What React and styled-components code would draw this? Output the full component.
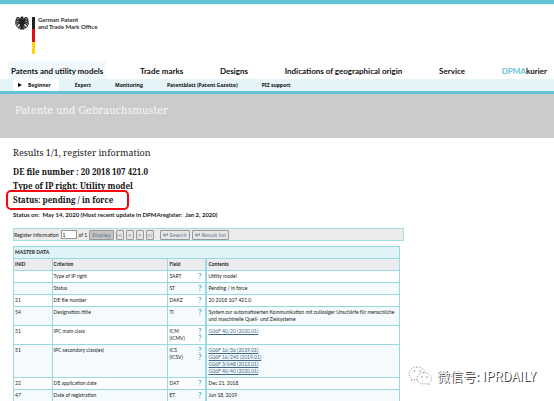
import { Fragment } from "react";
import styled, { createGlobalStyle } from "styled-components";

const navItems = [
  { label: "Patents and utility models", active: true },
  { label: "Trade marks" },
  { label: "Designs" },
  { label: "Indications of geographical origin" },
  { label: "Service" },
];

const subNavItems = [
  "Expert",
  "Monitoring",
  "Patentblatt (Patent Gazette)",
  "PIZ support",
];

const rows = [
  { criterion: "Type of IP right", fields: ["SART"], contents: "Utility model" },
  { criterion: "Status", fields: ["ST"], contents: "Pending / in force" },
  {
    inid: "21",
    criterion: "DE file number",
    fields: ["DAKZ"],
    contents: "20 2018 107 421.0",
  },
  {
    inid: "54",
    criterion: "Designation/title",
    fields: ["TI"],
    contents:
      "System zur automatisierten Kommunikation mit zulässiger Unschärfe für menschliche und maschinelle Quell- und Zielsysteme",
  },
  {
    inid: "51",
    criterion: "IPC main class",
    fields: ["ICM", "(ICMV)"],
    links: ["G06F 40/20 (2020.01)"],
  },
  {
    inid: "51",
    criterion: "IPC secondary class(es)",
    fields: ["ICS", "(ICSV)"],
    links: [
      "G06F 16/36 (2019.01)",
      "G06F 16/245 (2019.01)",
      "G06F 3/048 (2013.01)",
      "G06F 40/40 (2020.01)",
    ],
  },
  {
    inid: "22",
    criterion: "DE application date",
    fields: ["DAT"],
    contents: "Dec 21, 2018",
  },
  {
    inid: "47",
    criterion: "Date of registration",
    fields: ["ET"],
    contents: "Jun 18, 2019",
  },
];

const App = () => {
  return (
    <Page>
      <GlobalStyle />
      <Header>
        <Eagle />
        <Flag />
        <Office>
          German Patent
          <br />
          and Trade Mark Office
        </Office>
      </Header>
      <Nav>
        {navItems.map((item) => (
          <NavLink key={item.label} href="#" $active={item.active}>
            {item.label}
          </NavLink>
        ))}
        <NavLink href="#">
          <span>DPMA</span>kurier
        </NavLink>
      </Nav>
      <SubNav>
        <SubLink href="#" $active>
          <Arrow viewBox="0 0 4 4">
            <path d="M0 0L4 2L0 4Z" />
          </Arrow>
          Beginner
        </SubLink>
        {subNavItems.map((item) => (
          <SubLink key={item} href="#">
            {item}
          </SubLink>
        ))}
      </SubNav>
      <Banner>Patente und Gebrauchsmuster</Banner>
      <Main>
        <Title>Results 1/1, register information</Title>
        <Facts>
          <Fact>DE file number : 20 2018 107 421.0</Fact>
          <Fact>Type of IP right: Utility model</Fact>
          <MarkedFact>Status: pending / in force</MarkedFact>
        </Facts>
        <Updated>
          Status on:&nbsp; May 14, 2020 (Most recent update in
          DPMAregister:&nbsp; Jan 2, 2020)
        </Updated>
        <Toolbar>
          <label htmlFor="record">Register information</label>
          <RecordInput id="record" type="text" defaultValue="1" />
          <span>of 1</span>
          <Buttons>
            <Button $dark>Display</Button>
            <Button $muted aria-label="First">|&lt;</Button>
            <Button $muted aria-label="Previous">&lt;</Button>
            <Button $muted aria-label="Next">&gt;</Button>
            <Button $muted aria-label="Last">&gt;|</Button>
          </Buttons>
          <Buttons $apart>
            <Button>
              <BackIcon /> Search
            </Button>
            <Button>
              <BackIcon /> Result list
            </Button>
          </Buttons>
        </Toolbar>
        <TableBox>
          <Table>
            <colgroup>
              <col width="10%" />
              <col width="30%" />
              <col width="10%" />
              <col width="50%" />
            </colgroup>
            <thead>
              <tr>
                <Caption colSpan={4}>MASTER DATA</Caption>
              </tr>
              <tr>
                <th>INID</th>
                <th>Criterion</th>
                <th>Field</th>
                <th>Contents</th>
              </tr>
            </thead>
            <tbody>
              {rows.map((row) => (
                <tr key={row.criterion}>
                  <td>{row.inid}</td>
                  <td>{row.criterion}</td>
                  <td>
                    <Field>
                      {row.fields.map((field) => (
                        <Fragment key={field}>
                          <span>{field}</span>
                          <Help href="#">?</Help>
                        </Fragment>
                      ))}
                    </Field>
                  </td>
                  <td>
                    {row.contents}
                    {row.links?.map((link) => (
                      <ClassLink key={link} href="#">
                        {link}
                      </ClassLink>
                    ))}
                  </td>
                </tr>
              ))}
            </tbody>
          </Table>
        </TableBox>
      </Main>
      <Watermark>
        <WeChat />
        微信号: IPRDAILY
      </Watermark>
    </Page>
  );
};

const Eagle = () => (
  <EagleSvg viewBox="0 0 28 28">
    <g fill="none" stroke="#222" strokeWidth="2.4" strokeLinecap="round">
      <path d="M11 8C9 3 6 2 4 4M11 10C7 5 4 5 2 8M11 12C7 8 3 9 1 12M11 14C7 11 3 13 1 16M11 16C8 14 4 16 3 20" />
      <path d="M17 8C19 3 22 2 24 4M17 10C21 5 24 5 26 8M17 12C21 8 25 9 27 12M17 14C21 11 25 13 27 16M17 16C20 14 24 16 25 20" />
      <path d="M12 18L8 22L5 22M8 22L8 25M16 18L20 22L23 22M20 22L20 25M14 18V27M13 19L11 26M15 19L17 26" />
    </g>
    <path
      d="M11 3L13 1H16L17 3V7L18 9V16L16 20H12L10 16V9L12 7V5L9 5Z"
      fill="#222"
    />
  </EagleSvg>
);

const BackIcon = () => (
  <BackSvg viewBox="0 0 10 8">
    <path
      d="M9 1V4H1M4 1L1 4L4 7"
      fill="none"
      stroke="currentColor"
      strokeWidth="1.4"
    />
  </BackSvg>
);

const WeChat = () => (
  <WeChatSvg viewBox="0 0 24 20">
    <g fill="#fff" stroke="#888" strokeWidth="1" strokeDasharray="1 1.6">
      <path d="M9 1C4 1 1 4 1 7.500C1 10 2 11 4 12.500L3 15L6 13.500C8 14 9 14 11 14C16 13 18 10 17 6C16 3 13 1 9 1Z" />
      <path d="M16 6.500C12 6.500 9 9 9 12.500C9 16 12 18 16 18L19 17.500L21 19L21 17C23 15.500 23.500 14 23.500 12.500C23 9 20 6.500 16 6.500Z" />
    </g>
    <g fill="#777">
      <circle cx="6.500" cy="5" r="0.700" />
      <circle cx="12" cy="5" r="0.700" />
      <circle cx="14" cy="11" r="0.700" />
      <circle cx="19" cy="11" r="0.700" />
    </g>
  </WeChatSvg>
);

const GlobalStyle = createGlobalStyle`
  * {
    box-sizing: border-box;
  }
  body {
    margin: 0;
    overflow: hidden;
    background-color: #fff;
    color: #222;
    font-family: Lato, "Liberation Sans", sans-serif;
    font-size: 5px;
  }
  a {
    color: inherit;
    text-decoration: none;
  }
`;

const Page = styled.div`
  position: relative;
  min-height: 100vh;
  border-top: 4px solid #63c3d6;
`;

const Header = styled.header`
  display: flex;
  align-items: flex-start;
  height: 57px;
  padding: 11px 15px 0;
  border-top: 1px solid #e0f4f8;
`;

const EagleSvg = styled.svg`
  width: 14px;
  height: 14px;
`;

const Flag = styled.div`
  width: 3px;
  height: 37px;
  margin: 1px 3px 0;
  background: linear-gradient(
    #222 0 12px,
    #e30b20 12px 25px,
    #f7d50f 25px 37px
  );
`;

const Office = styled.div`
  color: #333;
  font-size: 6px;
  font-weight: 700;
  line-height: 7px;
`;

const Nav = styled.nav`
  display: flex;
  justify-content: space-between;
  padding: 0 4px 0 8px;
`;

const NavLink = styled.a`
  padding: 3px 3px 0;
  background-color: ${(props) => (props.$active ? "#f2f9fc" : "#fff")};
  color: #111;
  font-size: 8px;
  font-weight: 700;
  line-height: 15px;
  white-space: nowrap;
  span {
    color: #63c3d6;
  }
`;

const SubNav = styled.nav`
  display: flex;
  gap: 8px;
  padding-left: 13px;
  border-bottom: 3px solid #63c3d6;
  background-color: #e4f4f7;
`;

const SubLink = styled.a`
  padding: 0 8px;
  padding-left: ${(props) => (props.$active ? "5px" : "8px")};
  background-color: ${(props) => (props.$active ? "#fff" : "transparent")};
  color: #111;
  font-family: "Noto Sans", "Open Sans", sans-serif;
  font-weight: 700;
  line-height: 12px;
  white-space: nowrap;
`;

const Arrow = styled.svg`
  width: 4px;
  height: 4px;
  margin-right: 6px;
`;

const Banner = styled.div`
  height: 44px;
  padding: 8px 15px;
  background-color: #cbcbcb;
  color: #f8f8f8;
  font-family: "DejaVu Serif Condensed", "DejaVu Serif", serif;
  font-size: 11px;
  line-height: 17px;
`;

const Main = styled.main`
  padding: 6px 150px 0 13px;
`;

const Title = styled.h1`
  margin: 0;
  font-family: "Noto Serif", "DejaVu Serif Condensed", serif;
  font-size: 9px;
  font-weight: 400;
  line-height: 17px;
`;

const Facts = styled.div`
  display: flex;
  flex-direction: column;
  align-items: flex-start;
  margin-top: 4px;
`;

const Fact = styled.p`
  margin: 0;
  color: #111;
  font-family: "Noto Serif", "DejaVu Serif Condensed", serif;
  font-size: 8px;
  font-weight: 700;
  line-height: 14px;
`;

const MarkedFact = styled(Fact)`
  margin-left: -4px;
  padding: 0 13px 0 4px;
  border-radius: 2px;
  outline: 2px solid #f80510;
  outline-offset: 1px;
`;

const Updated = styled.p`
  margin: 3px 0 9px;
  font-size: 6px;
  font-weight: 700;
  line-height: 9px;
`;

const Toolbar = styled.div`
  display: flex;
  align-items: center;
  gap: 2px;
  height: 13px;
  border: 1px solid #a5dbe4;
  background-color: #ebebeb;
`;

const RecordInput = styled.input`
  width: 16px;
  height: 9px;
  padding: 0 1px;
  border: 1px solid #999;
  background-color: #fff;
  font: inherit;
`;

const Buttons = styled.div`
  display: flex;
  gap: 2px;
  margin-left: ${(props) => (props.$apart ? "4px" : "0")};
`;

const Button = styled.button`
  display: flex;
  align-items: center;
  justify-content: center;
  gap: 2px;
  min-width: 8px;
  height: 10px;
  padding: 0 ${(props) => (props.$muted ? "0" : "2px")};
  border: 1px solid #999;
  border-radius: 1px;
  background-color: ${(props) => (props.$dark ? "#c4c4c4" : "#e6e6e6")};
  color: ${(props) => (props.$muted ? "#888" : "#4c6480")};
  font-family: "DejaVu Sans", sans-serif;
  font-size: 5px;
  line-height: 8px;
`;

const BackSvg = styled.svg`
  width: 5px;
  height: 4px;
`;

const TableBox = styled.div`
  margin: 5px 4px 0 0;
`;

const Table = styled.table`
  width: 100%;
  border: 1px solid #9ad8e3;
  border-collapse: collapse;
  table-layout: fixed;
  line-height: 7px;
  th,
  td {
    padding: 2px 1px;
    border: 1px solid #9ad8e3;
    text-align: left;
    vertical-align: top;
  }
  th {
    background-color: #ececee;
    font-weight: 700;
  }
  td:last-child,
  th:nth-child(4) {
    border-left-width: 2px;
  }
  tbody tr:nth-child(even) td {
    background-color: #f5fbfc;
  }
`;

const Caption = styled.th`
  && {
    background-color: #e0f3f7;
  }
`;

const Field = styled.div`
  display: grid;
  grid-template-columns: 1fr auto;
  padding-right: 3px;
`;

const Help = styled.a`
  color: #3fb4ca;
  font-size: 7px;
  font-weight: 700;
`;

const ClassLink = styled.a`
  display: table;
  color: #41688a;
  text-decoration: underline;
`;

const Watermark = styled.div`
  position: absolute;
  right: 18px;
  bottom: 16px;
  display: flex;
  align-items: center;
  gap: 5px;
  color: #fff;
  font-family: "Noto Sans CJK SC", sans-serif;
  font-size: 13px;
  line-height: 20px;
  text-shadow: 1px 1px 0 #444;
`;

const WeChatSvg = styled.svg`
  width: 24px;
  height: 20px;
`;

export default App;
